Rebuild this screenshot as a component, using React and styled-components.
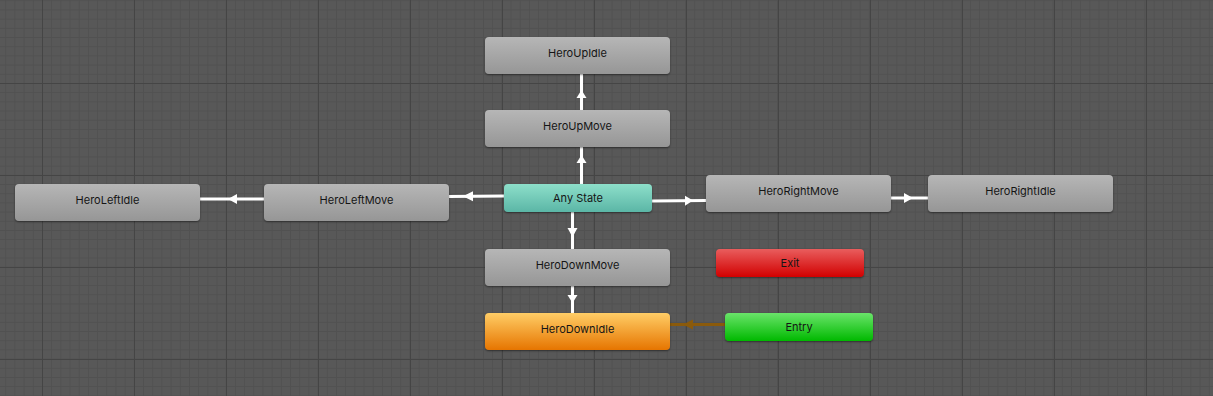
import React from 'react';
import styled, { createGlobalStyle, css } from 'styled-components';

const GlobalStyle = createGlobalStyle`
    html, body {
        margin : 0;
        padding : 0;
        background : #585858;
        overflow : hidden;
    }
`;

const Canvas = styled.div`
    position : relative;
    width : 1213px;
    height : 396px;
    overflow : hidden;
    background-color : #585858;
    background-image :
        linear-gradient(to right, #454545 1px, transparent 1px),
        linear-gradient(to bottom, #454545 1px, transparent 1px),
        linear-gradient(to right, #515151 1px, transparent 1px),
        linear-gradient(to bottom, #515151 1px, transparent 1px);
    background-size : 92px 92px, 92px 92px, 9.2px 9.2px, 9.2px 9.2px;
    background-position : 42px 83px, 42px 83px, 42px 83px, 42px 83px;
    font-family : Inter, "Liberation Sans", sans-serif;
`;

const Edges = styled.svg`
    position : absolute;
    left : 0;
    top : 0;
    width : 1213px;
    height : 396px;
`;

const variants = {
    state : css`
        background : linear-gradient(to bottom, #b6b6b6, #969696);
    `,
    any : css`
        background : linear-gradient(to bottom, #8ddfca, #5bb6a6);
    `,
    exit : css`
        background : linear-gradient(to bottom, #e95d5d, #d10000);
    `,
    entry : css`
        background : linear-gradient(to bottom, #6ae46a, #00b900);
    `,
    default : css`
        background : linear-gradient(to bottom, #ffcd66, #e67500);
    `,
};

const StateNode = styled.div`
    position : absolute;
    left : ${(props) => props.x}px;
    top : ${(props) => props.y}px;
    width : ${(props) => props.w}px;
    height : ${(props) => props.h}px;
    box-sizing : border-box;
    padding-bottom : ${(props) => props.h > 32 ? '5px' : '0'};
    border-radius : 4px;
    display : flex;
    align-items : center;
    justify-content : center;
    font-size : 11px;
    color : #151515;
    box-shadow : 0 1px 2px rgba(0, 0, 0, 0.45);
    ${(props) => variants[props.kind]}
`;

const nodes = [
    { name : 'HeroUpIdle', x : 485, y : 37, w : 185, h : 37, kind : 'state' },
    { name : 'HeroUpMove', x : 485, y : 110, w : 185, h : 37, kind : 'state' },
    { name : 'HeroLeftIdle', x : 15, y : 184, w : 185, h : 37, kind : 'state' },
    { name : 'HeroLeftMove', x : 264, y : 184, w : 185, h : 37, kind : 'state' },
    { name : 'Any State', x : 504, y : 184, w : 148, h : 28, kind : 'any' },
    { name : 'HeroRightMove', x : 706, y : 175, w : 185, h : 37, kind : 'state' },
    { name : 'HeroRightIdle', x : 928, y : 175, w : 185, h : 37, kind : 'state' },
    { name : 'HeroDownMove', x : 485, y : 249, w : 185, h : 37, kind : 'state' },
    { name : 'Exit', x : 716, y : 249, w : 148, h : 28, kind : 'exit' },
    { name : 'HeroDownIdle', x : 485, y : 313, w : 185, h : 37, kind : 'default' },
    { name : 'Entry', x : 725, y : 313, w : 148, h : 28, kind : 'entry' },
];

// from, to, arrow tip/base along the line
const edges = [
    { x1 : 581.5, y1 : 110, x2 : 581.5, y2 : 74, tip : 90, base : 98 },
    { x1 : 581.5, y1 : 184, x2 : 581.5, y2 : 147, tip : 155, base : 163 },
    { x1 : 504, y1 : 196, x2 : 449, y2 : 196.5, tip : 463, base : 473 },
    { x1 : 264, y1 : 199, x2 : 200, y2 : 199, tip : 228, base : 237 },
    { x1 : 652, y1 : 201, x2 : 706, y2 : 200.5, tip : 693, base : 685 },
    { x1 : 891, y1 : 198, x2 : 928, y2 : 198, tip : 913, base : 904 },
    { x1 : 572.5, y1 : 212, x2 : 572.5, y2 : 249, tip : 237, base : 228 },
    { x1 : 572.5, y1 : 286, x2 : 572.5, y2 : 313, tip : 303, base : 295 },
    { x1 : 725, y1 : 324.5, x2 : 670, y2 : 324.5, tip : 683, base : 693, color : '#8a5a0c' },
];

const Arrow = ({ edge }) => {
    const color = edge.color || '#ffffff';
    const vertical = edge.x1 === edge.x2;
    let points;
    if (vertical) {
        const x = edge.x1;
        points = `${x},${edge.tip} ${x - 5},${edge.base} ${x + 5},${edge.base}`;
    } else {
        const t = (edge.tip - edge.x1) / (edge.x2 - edge.x1);
        const b = (edge.base - edge.x1) / (edge.x2 - edge.x1);
        const ty = edge.y1 + (edge.y2 - edge.y1) * t;
        const by = edge.y1 + (edge.y2 - edge.y1) * b;
        points = `${edge.tip},${ty} ${edge.base},${by - 5} ${edge.base},${by + 5}`;
    }
    return (
        <g>
            <line x1={edge.x1} y1={edge.y1} x2={edge.x2} y2={edge.y2} stroke={color} strokeWidth="3" />
            <polygon points={points} fill={color} />
        </g>
    );
};

const App = () => {
    return (
        <>
            <GlobalStyle />
            <Canvas>
                <Edges viewBox="0 0 1213 396">
                    {edges.map((edge, i) => <Arrow edge={edge} key={i} />)}
                </Edges>
                {
                    nodes.map((node) => (
                        <StateNode key={node.name} x={node.x} y={node.y} w={node.w} h={node.h} kind={node.kind}>
                            {node.name}
                        </StateNode>
                    ))
                }
            </Canvas>
        </>
    );
};

export default App;
